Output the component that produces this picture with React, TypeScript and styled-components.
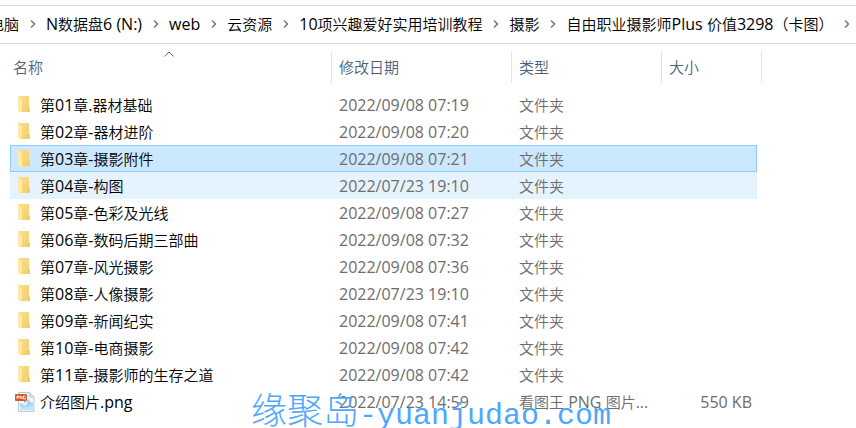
import React from "react";
import styled, { createGlobalStyle } from "styled-components";

const GlobalStyle = createGlobalStyle`
  *, *::before, *::after { box-sizing: border-box; }
  html, body { margin: 0; background: #fff; overflow: hidden; }
  body {
    font-family: "Noto Sans CJK SC", "Open Sans", sans-serif;
    font-size: 15px;
    font-weight: 350;
    line-height: 20px;
    color: #000;
  }
`;

const Window = styled.main`
  position: relative;
  min-height: 100vh;
  padding-top: 5px;
  overflow: hidden;
`;

const AddressBar = styled.nav`
  height: 39px;
  border-top: 1px solid #d9d9d9;
  border-bottom: 1px solid #d9d9d9;
  overflow: hidden;
`;

const CrumbList = styled.ol`
  display: flex;
  align-items: center;
  height: 36px;
  margin: 0 0 0 -26px;
  padding: 0;
  list-style: none;
`;

const Crumb = styled.li`
  display: flex;
  align-items: center;
  flex: none;
  white-space: nowrap;
`;

const CrumbLink = styled.a`
  color: #000;
  text-decoration: none;
`;

const CrumbArrow = styled.button`
  display: flex;
  align-items: center;
  justify-content: center;
  width: 27px;
  height: 24px;
  padding: 0;
  border: 0;
  background: none;
`;

const Latin = styled.span`
  font-family: "Open Sans", "Noto Sans", sans-serif;
  font-size: 16px;
  font-weight: 400;
`;

const FileTable = styled.table`
  width: calc(100% - 109px);
  margin-left: 10px;
  table-layout: fixed;
  border-collapse: separate;
  border-spacing: 0;
`;

const HeadCell = styled.th<{ $width?: number }>`
  position: relative;
  width: ${(p) => (p.$width ? `${p.$width}px` : "auto")};
  height: 47px;
  padding: 0;
  font-weight: 350;
  text-align: left;
  vertical-align: top;

  &::after {
    content: "";
    position: absolute;
    top: 7px;
    right: -1px;
    width: 1px;
    height: 32px;
    background: #e3e3e3;
  }

  &:last-child::after {
    right: -5px;
  }
`;

const HeadButton = styled.button<{ $first?: boolean }>`
  width: 100%;
  height: 46px;
  padding: 0 0 0 ${(p) => (p.$first ? 3 : 8)}px;
  border: 0;
  background: none;
  color: #4c607a;
  font: inherit;
  text-align: left;
`;

const SortMark = styled.svg`
  position: absolute;
  top: 7px;
  left: calc(50% - 7px);
`;

const Row = styled.tr<{ $state?: "selected" | "hover" }>`
  background: ${(p) =>
    p.$state === "selected" ? "#cce8ff" : p.$state === "hover" ? "#e5f3ff" : "transparent"};
  outline: ${(p) => (p.$state === "selected" ? "1px solid #91cbfa" : "none")};
  outline-offset: -1px;
`;

const Cell = styled.td<{ $end?: boolean }>`
  height: 27px;
  padding: ${(p) => (p.$end ? "0 5px 0 0" : "0 0 0 8px")};
  color: #6d6d6d;
  text-align: ${(p) => (p.$end ? "right" : "left")};
  white-space: nowrap;
  overflow: hidden;
`;

const NameCell = styled(Cell)`
  padding-left: 5px;
  color: #000;
`;

const FileName = styled.div`
  display: flex;
  align-items: center;
  gap: 5px;
  height: 27px;
`;

const FileIcon = styled.svg`
  flex: none;
  width: 20px;
  height: 22px;
`;

const Watermark = styled.div`
  position: absolute;
  top: 386px;
  left: 251px;
  color: #4da6ff;
  font-size: 36px;
  font-weight: 300;
  line-height: 44px;
  white-space: nowrap;
  pointer-events: none;
`;

const WatermarkDomain = styled.span`
  font-family: "Liberation Mono", monospace;
  font-size: 30px;
`;

/* Chinese and Latin runs use different faces, as the system UI font does. */
function Mixed({ text }: { text: string }) {
  return (
    <span>
      {text.split(/([\x20-\x7e]+)/).map((run, i) =>
        i % 2 ? <Latin key={i}>{run}</Latin> : run
      )}
    </span>
  );
}

function FolderIcon() {
  return (
    <FileIcon viewBox="0 0 20 22" aria-hidden="true">
      <defs>
        <linearGradient id="folderBody" x1="0" x2="1" y1="0" y2="1">
          <stop offset="0" stopColor="#fbdf8e" />
          <stop offset="1" stopColor="#f3cd67" />
        </linearGradient>
      </defs>
      <path d="M3 2h11v11l1 1v4H6L3 16z" fill="url(#folderBody)" />
      <path d="M3 2l4 4v10l-1 3-3-2z" fill="#ffe9a8" />
      <path d="M13.500 13v4" stroke="#e9c25c" strokeWidth="1" opacity=".6" />
    </FileIcon>
  );
}

function PngIcon() {
  return (
    <FileIcon viewBox="0 0 20 22" aria-hidden="true">
      <path d="M3.500 1.500h11l4.500 4.500v14.500h-15.500z" fill="#eef6fb" stroke="#b5ccda" />
      <path d="M14.500 1.500V6H19z" fill="#cfe0ea" stroke="#b5ccda" />
      <path d="M5 12l3 1 1 2 3-2 0-3 2-2 1 3 3 1v7H5z" fill="#a9d4ef" />
      <path d="M5 15l3 2 3-2 2 2 2-3 3 2v3H5z" fill="#c4e3f5" />
      <path d="M9 10l2-1 0 2-2 1z" fill="#8fc3e5" />
      <rect x="0" y="3" width="12" height="7" rx="1" fill="#d9552b" />
      <path
        d="M2 8V5h1.500v1.500H2M5 8V5l2 3V5M10.500 5H8.500v3h2V6.500"
        fill="none"
        stroke="#fff"
        strokeWidth=".8"
      />
    </FileIcon>
  );
}

const crumbs = [
  "此电脑",
  "N数据盘6 (N:)",
  "web",
  "云资源",
  "10项兴趣爱好实用培训教程",
  "摄影",
  "自由职业摄影师Plus 价值3298（卡图）",
];

type Entry = {
  name: string;
  date: string;
  type: string;
  size?: string;
  state?: "selected" | "hover";
};

const folder = "文件夹";

const entries: Entry[] = [
  { name: "第01章.器材基础", date: "2022/09/08 07:19", type: folder },
  { name: "第02章-器材进阶", date: "2022/09/08 07:20", type: folder },
  { name: "第03章-摄影附件", date: "2022/09/08 07:21", type: folder, state: "selected" },
  { name: "第04章-构图", date: "2022/07/23 19:10", type: folder, state: "hover" },
  { name: "第05章-色彩及光线", date: "2022/09/08 07:27", type: folder },
  { name: "第06章-数码后期三部曲", date: "2022/09/08 07:32", type: folder },
  { name: "第07章-风光摄影", date: "2022/09/08 07:36", type: folder },
  { name: "第08章-人像摄影", date: "2022/07/23 19:10", type: folder },
  { name: "第09章-新闻纪实", date: "2022/09/08 07:41", type: folder },
  { name: "第10章-电商摄影", date: "2022/09/08 07:42", type: folder },
  { name: "第11章-摄影师的生存之道", date: "2022/09/08 07:42", type: folder },
  { name: "介绍图片.png", date: "2022/07/23 14:59", type: "看图王 PNG 图片...", size: "550 KB" },
];

export default function App() {
  return (
    <Window>
      <GlobalStyle />
      <AddressBar aria-label="地址">
        <CrumbList>
          {crumbs.map((crumb) => (
            <Crumb key={crumb}>
              <CrumbLink href="#">
                <Mixed text={crumb} />
              </CrumbLink>
              <CrumbArrow type="button" aria-label={`展开 ${crumb}`}>
                <svg width="6" height="8" viewBox="0 0 6 8" aria-hidden="true">
                  <path d="M1 .5L4.500 4 1 7.500" fill="none" stroke="#777" strokeWidth="1.500" />
                </svg>
              </CrumbArrow>
            </Crumb>
          ))}
        </CrumbList>
      </AddressBar>

      <FileTable>
        <thead>
          <tr>
            <HeadCell scope="col" aria-sort="ascending">
              <HeadButton type="button" $first>名称</HeadButton>
              <SortMark width="10" height="6" viewBox="0 0 10 6" aria-hidden="true">
                <path d="M.5 5.500L5 1l4.500 4.500" fill="none" stroke="#666" />
              </SortMark>
            </HeadCell>
            <HeadCell scope="col" $width={180}>
              <HeadButton type="button">修改日期</HeadButton>
            </HeadCell>
            <HeadCell scope="col" $width={150}>
              <HeadButton type="button">类型</HeadButton>
            </HeadCell>
            <HeadCell scope="col" $width={96}>
              <HeadButton type="button">大小</HeadButton>
            </HeadCell>
          </tr>
        </thead>
        <tbody>
          {entries.map((entry) => (
            <Row key={entry.name} $state={entry.state} aria-selected={entry.state === "selected"}>
              <NameCell>
                <FileName>
                  {entry.size ? <PngIcon /> : <FolderIcon />}
                  <Mixed text={entry.name} />
                </FileName>
              </NameCell>
              <Cell><Mixed text={entry.date} /></Cell>
              <Cell><Mixed text={entry.type} /></Cell>
              <Cell $end>{entry.size && <Mixed text={entry.size} />}</Cell>
            </Row>
          ))}
        </tbody>
      </FileTable>

      <Watermark>
        缘聚岛<WatermarkDomain>-yuanjudao.com</WatermarkDomain>
      </Watermark>
    </Window>
  );
}
